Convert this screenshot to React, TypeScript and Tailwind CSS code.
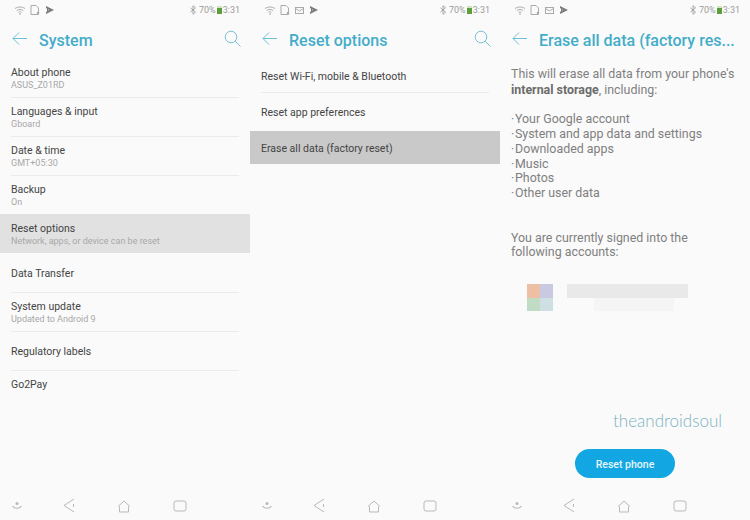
import type { ReactNode } from "react";

const sans = "font-['Roboto','Liberation_Sans',sans-serif]";

function StatusBar({ mail }: { mail?: boolean }) {
  return (
    <div className="flex h-[20px] items-center justify-between pl-[14px] pr-[10px]">
      <div className="flex items-center gap-[4px] text-[#aaaaaa]">
        <svg width="12" height="9" viewBox="0 0 12 9" fill="none" stroke="currentColor">
          <path d="M1 2.5C4 .5 8 .5 11 2.5" />
          <path d="M2.8 4.5c2-1.3 4.4-1.3 6.4 0" />
          <path d="M4.6 6.3c1-.6 1.8-.6 2.8 0" />
          <path d="M6 7v2" />
        </svg>
        <svg width="10" height="10" viewBox="0 0 10 10" fill="none" stroke="currentColor">
          <path d="M1 .5h5L8.5 3v6.5H1z" />
          <circle cx="8" cy="8" r="1.3" fill="currentColor" stroke="none" />
        </svg>
        {mail && (
          <svg width="9" height="7" viewBox="0 0 9 7" fill="none" stroke="currentColor" className="ml-[1px]">
            <rect x=".5" y=".5" width="8" height="6" />
            <path d="M.5 1.5l4 2.5 4-2.5" />
          </svg>
        )}
        <svg width="8" height="8" viewBox="0 0 8 8" fill="currentColor" className="ml-[2px] text-[#7b7b7b]">
          <path d="M0 0l8 4-8 4V6l3-2-3-2z" />
          <path d="M1 1h1v6H1z" />
        </svg>
      </div>
      <div className="flex items-center text-[9px] leading-none text-[#9a9a9a]">
        <svg width="6" height="10" viewBox="0 0 7 11" fill="none" stroke="currentColor" className="mr-[3px]">
          <path d="M.5 3l6 5-3 2.5v-10l3 2.5-6 5" />
        </svg>
        <span>70%</span>
        <span className="mx-[1px] flex h-[8px] w-[5px] items-end bg-[#cfe5bd]">
          <span className="h-[6px] w-full bg-[#5c9e3c]" />
        </span>
        <span>3:31</span>
      </div>
    </div>
  );
}

function Header({ title, search = true }: { title: string; search?: boolean }) {
  return (
    <div className="flex h-[38px] items-center pl-[12px] pr-[9px]">
      <svg width="15" height="13" viewBox="0 0 15 13" fill="none" stroke="#6cc0d6" className="-mt-[2px] shrink-0">
        <path d="M15 6.5H1M7 .5L1 6.5l6 6" />
      </svg>
      <div className="ml-[12px] mt-[4px] flex-1 truncate text-[16px] font-medium leading-[20px] text-[#43adc9]">{title}</div>
      {search && (
        <svg width="17" height="17" viewBox="0 0 17 17" fill="none" stroke="#7cc2d6" className="-mt-[2px] shrink-0">
          <circle cx="7" cy="7" r="5.8" />
          <path d="M11.2 11.2l5.3 5.3" />
        </svg>
      )}
    </div>
  );
}

function NavBar() {
  return (
    <div className="absolute inset-x-0 bottom-0 flex h-[35px] items-start text-[#b9b9b9]">
      <svg width="12" height="10" viewBox="0 0 12 10" fill="none" stroke="currentColor" className="ml-[11px] mt-[16px]">
        <circle cx="6" cy="2.5" r="1.5" fill="currentColor" stroke="none" />
        <path d="M1.5 5c2 3 7 3 9 0" strokeWidth="1.2" />
      </svg>
      <svg width="12" height="15" viewBox="0 0 12 15" fill="none" stroke="currentColor" className="ml-[40px] mt-[13px]">
        <path d="M11 1L1 7.5 11 14" />
        <path d="M10.5 6v3" />
      </svg>
      <svg width="14" height="13" viewBox="0 0 14 13" fill="none" stroke="currentColor" className="ml-[42px] mt-[15px]">
        <path d="M1 6.5L7 1l6 5.5M2.5 6.5V12h9V6.5" />
      </svg>
      <svg width="14" height="12" viewBox="0 0 14 12" fill="none" stroke="currentColor" className="ml-[42px] mt-[15px]">
        <rect x="1" y="1" width="12" height="10" rx="2" />
      </svg>
    </div>
  );
}

function Row({ title, sub, active }: { title: string; sub?: string; active?: boolean }) {
  return (
    <div className={`flex h-[39px] flex-col justify-center ${sub ? "pt-[3px]" : "pt-[2px]"} ${active ? "bg-[#e1e1e1]" : ""}`}>
      <div className="pl-[11px] text-[10.5px] leading-[13px] text-[#444444]">{title}</div>
      {sub && <div className="pl-[11px] text-[9px] leading-[13px] text-[#a8a8a8]">{sub}</div>}
    </div>
  );
}

function Phone({ children }: { children: ReactNode }) {
  return <div className="relative h-[520px] w-[250px] overflow-hidden bg-[#fafafa]">{children}</div>;
}

const settings = [
  { title: "About phone", sub: "ASUS_Z01RD" },
  { title: "Languages & input", sub: "Gboard" },
  { title: "Date & time", sub: "GMT+05:30" },
  { title: "Backup", sub: "On" },
  { title: "Reset options", sub: "Network, apps, or device can be reset", active: true },
  { title: "Data Transfer" },
  { title: "System update", sub: "Updated to Android 9" },
  { title: "Regulatory labels" },
];

const erased = [
  "Your Google account",
  "System and app data and settings",
  "Downloaded apps",
  "Music",
  "Photos",
  "Other user data",
];

export default function App() {
  return (
    <div className={`flex h-[520px] w-[750px] bg-[#fafafa] ${sans}`}>
      <Phone>
        <StatusBar />
        <Header title="System" />
        <div className="flex flex-col">
          {settings.map((s, i) => (
            <div key={s.title} className="relative">
              <Row {...s} />
              {![3, 4].includes(i) && <div className="absolute inset-x-[11px] -bottom-px h-px bg-[#ebebeb]" />}
            </div>
          ))}
          <div className="pl-[11px] pt-[8px] text-[10.5px] leading-[13px] text-[#444444]">Go2Pay</div>
        </div>
        <NavBar />
      </Phone>

      <Phone>
        <StatusBar mail />
        <Header title="Reset options" />
        <div className="flex flex-col">
          <div className="flex h-[34px] items-center pl-[11px] pt-[4px] text-[10.5px] text-[#444444]">
            Reset Wi-Fi, mobile &amp; Bluetooth
          </div>
          <div className="mx-[11px] h-px bg-[#ebebeb]" />
          <div className="flex h-[38px] items-center pl-[11px] pt-[2px] text-[10.5px] text-[#444444]">
            Reset app preferences
          </div>
          <div className="flex h-[33px] items-center bg-[#c9c9c9] pl-[11px] pt-[3px] text-[10.5px] text-[#444444]">
            Erase all data (factory reset)
          </div>
        </div>
        <NavBar />
      </Phone>

      <Phone>
        <StatusBar mail />
        <Header title="Erase all data (factory res..." search={false} />
        <div className="pl-[11px] pr-[4px] pt-[9px] text-[12.4px] leading-[14.7px] text-[#808080]">
          <p>This will erase all data from your phone's</p>
          <p className="mt-[1px]">
            <b className="font-bold text-[#6c6c6c]">internal storage</b>, including:
          </p>
          <ul className="mt-[15px]">
            {erased.map((e) => (
              <li key={e} className="flex">
                <span className="w-[4px]">·</span>
                {e}
              </li>
            ))}
          </ul>
          <p className="mt-[30px]">You are currently signed into the</p>
          <p>following accounts:</p>
        </div>
        <div className="ml-[27px] mt-[24px] flex items-start">
          <div className="grid h-[27px] w-[26px] grid-cols-2 grid-rows-2">
            <div className="bg-[#edbfa5]" />
            <div className="bg-[#c9c9e2]" />
            <div className="bg-[#c0dcc5]" />
            <div className="bg-[#cfe0e4]" />
          </div>
          <div className="ml-[14px] flex flex-col">
            <div className="h-[14px] w-[121px] bg-[#e9e9e9]" />
            <div className="ml-[27px] h-[13px] w-[80px] bg-[#f5f5f5]" />
          </div>
        </div>
        <div className="absolute right-[28px] top-[411px] font-['Lato','Roboto',sans-serif] text-[17px] font-light leading-[20px] text-[#7db3c2]">
          theandroidsoul
        </div>
        <div className="absolute left-[75px] top-[449px] flex h-[29px] w-[100px] items-center justify-center rounded-full bg-[#12a7e3] pt-[2px] text-[10.5px] font-medium text-[#e6f6fd]">
          Reset phone
        </div>
        <NavBar />
      </Phone>
    </div>
  );
}
